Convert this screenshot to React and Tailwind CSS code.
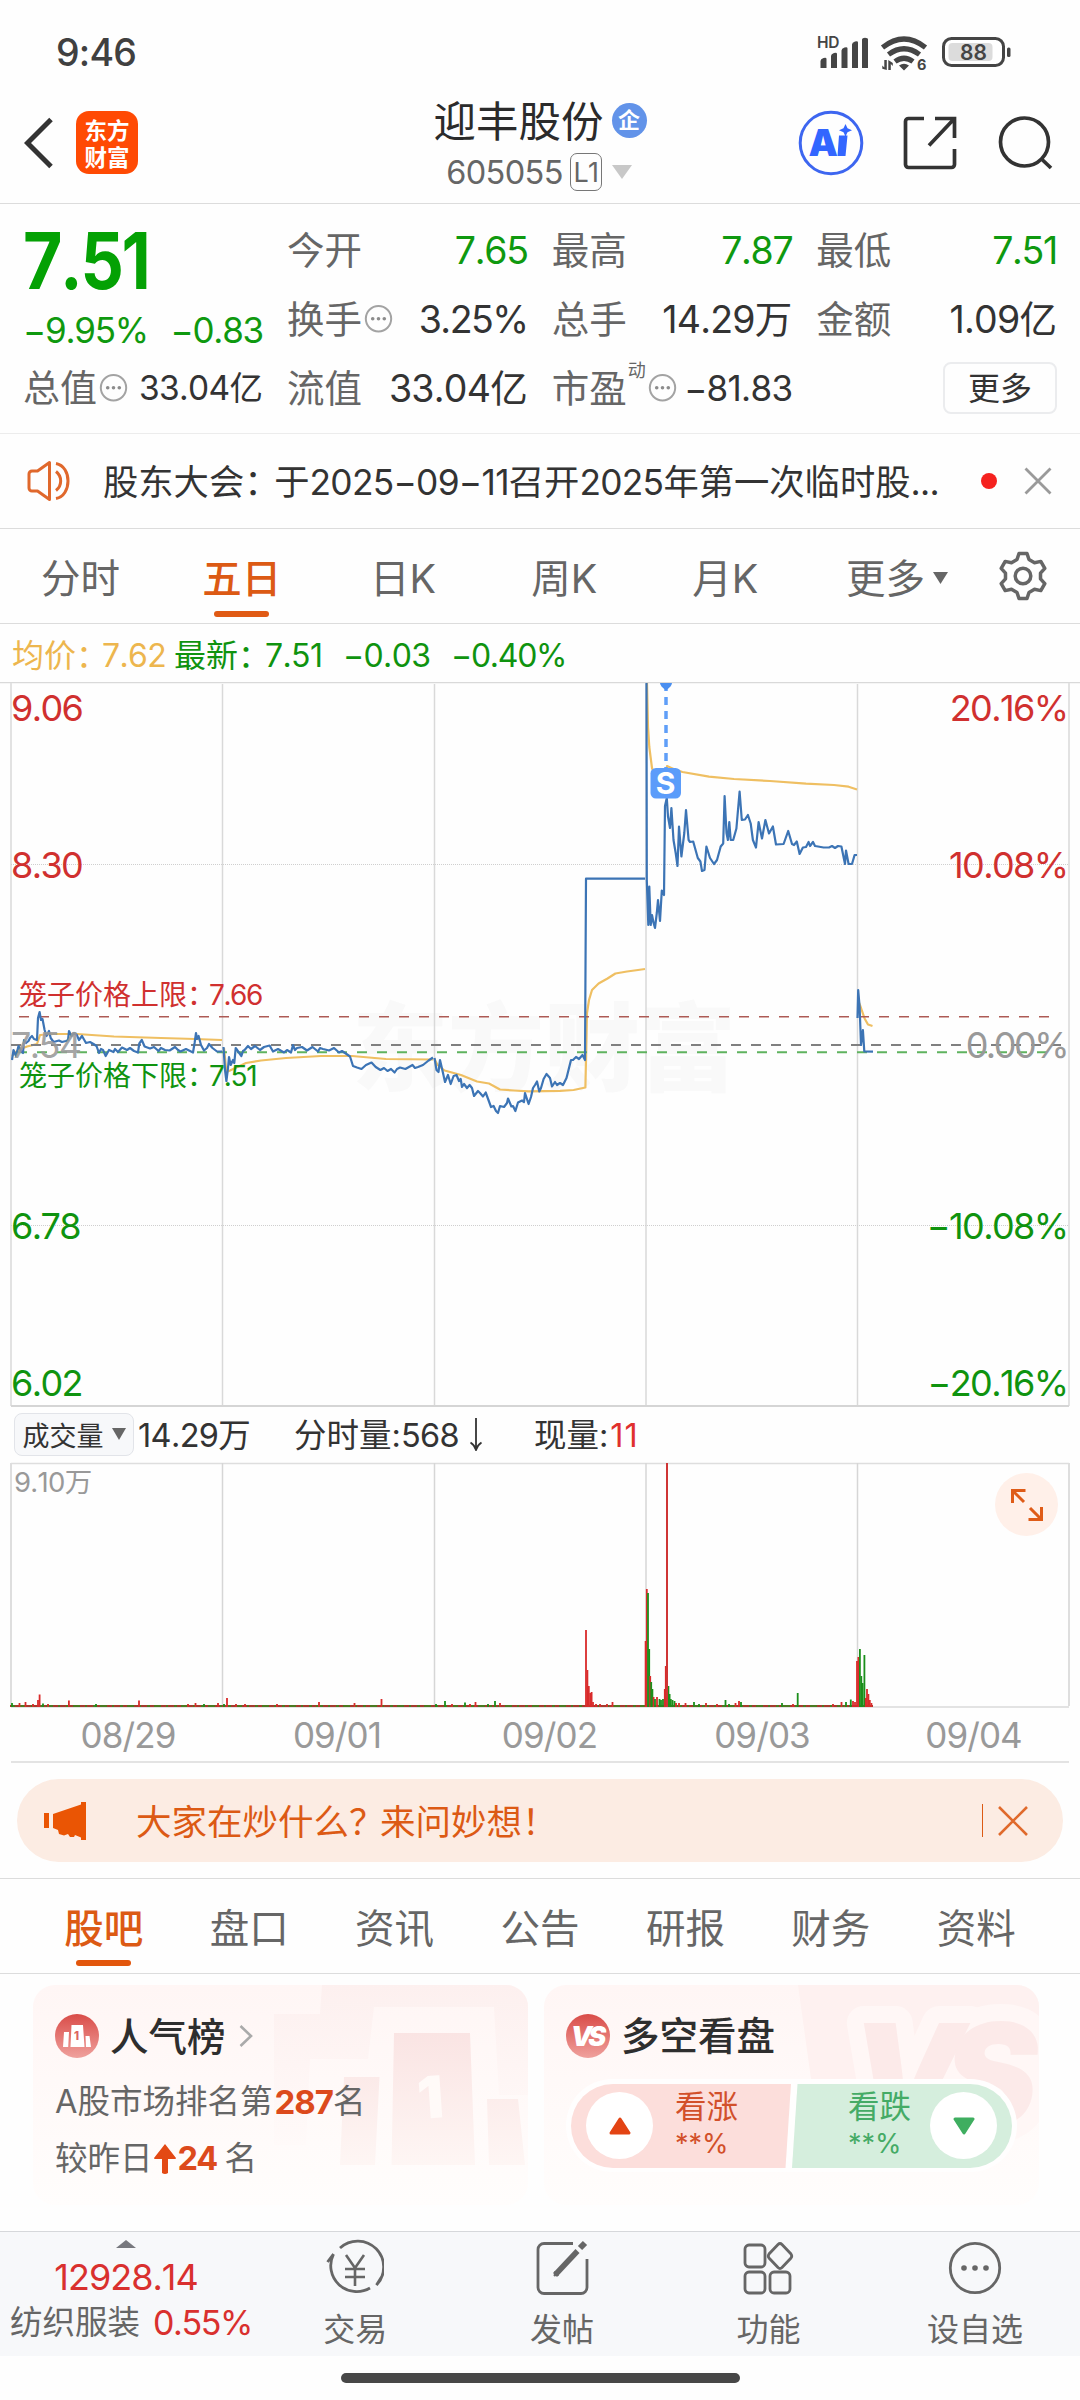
import { Fragment } from 'react'

const QUOTES = [
  { label: '今开', value: '7.65', up: false },
  { label: '最高', value: '7.87', up: false },
  { label: '最低', value: '7.51', up: false },
  { label: '换手', value: '3.25%', tip: true },
  { label: '总手', value: '14.29万' },
  { label: '金额', value: '1.09亿' },
]

const PERIODS = ['分时', '五日', '日K', '周K', '月K']
const SECTIONS = ['股吧', '盘口', '资讯', '公告', '研报', '财务', '资料']
const DATES = [['08/29', 128], ['09/01', 337], ['09/02', 549.5], ['09/03', 762], ['09/04', 973.5]]
const DAY_X = [222.5, 434.5, 646, 857.5]

const PRICE = [
  '12,1060 13.5,1050 16,1056 18.5,1046 21,1051 23,1053 24,1040 26,1043 28.5,1041 30,1038 32,1036 34,1039 37,1040 38,1018 39.6,1012 41,1020 42.5,1019 44.6,1030 46.5,1036 49,1031 50.7,1038 53.5,1042 59,1040.5 62,1042 66,1041 68,1040 69,1031 71.4,1036 74,1033 76.8,1035 79,1040 82,1036 86,1043 90,1042 93.5,1044 96.5,1046 99,1053 101,1049 103,1050 105.7,1056 109,1050 113.5,1052 115,1049 118,1052 122,1047.5 127,1050 130,1048 134,1051 138,1052.5 139.3,1043.5 141.8,1040 144.6,1046.5 150,1048.5 154,1047 158.5,1051 161,1048 165,1050 169.6,1050.5 175,1047 178,1050 180.4,1051.5 186,1049 190,1051 193,1052.5 194.6,1043 196,1033 197,1039 198.6,1036 201,1045 204,1050.5 207,1048 209,1044 212.5,1048 217,1051.5 222,1051.5',
  '223.5,1047 225,1070 226.4,1081 228,1068 229,1057 230.7,1065 233,1060 234.3,1063 235.7,1048 238.5,1052 241.4,1056 243,1051 244.6,1050 248,1046 251,1049 255,1046 260,1050 264,1047 269.6,1045.5 273,1051.5 278,1049 284,1052.5 287,1050 291,1052.5 293,1045 295,1050 297,1048 302,1047 307,1050.5 312.5,1047 318,1051.5 320,1048 323,1049 329,1050.5 334,1048 339,1052.5 342,1051 346.5,1054 350,1056.5 353,1066 357,1067.5 361.5,1069 366,1065 371.5,1062.5 375.7,1067 380.4,1070 384,1068 387.5,1071 391,1069 394.6,1072.5 397,1069 400,1067.5 405.4,1069 412.5,1065 415,1068 418,1067 423,1065 428.6,1060.5 433,1057.5',
  '434.5,1058 436.5,1070 438.5,1072 440,1060 443,1073 445,1082 448,1075 450.7,1084 453.6,1076 456.5,1075 459,1081 460.7,1079 462,1087 464,1084 467,1088 469.6,1085 472,1088 474,1096 478,1091 480,1093 483,1096.5 485.7,1092.5 489,1101.5 491,1107 493.6,1106 496,1111 498,1113 500,1106 504,1107 507,1103 508,1098.5 511.4,1106.5 513,1106 515.4,1111 518,1102.5 522,1100.5 524,1102 525,1093 528.6,1104 531,1097 533,1088 535,1085 537,1081.5 539.3,1091.5 541,1088 543.6,1079 546.5,1074 550,1078 552,1086.5 555,1082 557,1085 560,1083 563,1085 566.5,1078 569,1068 571,1060 573,1060 576,1057 579,1059 582.5,1055 585,1060 586,878.7 645,878.7',
  '646.5,683 646.8,880 648.3,925 649.3,886.5 650.7,925 652,915 653.6,923 655,928 656.8,913 658,900 660,921 661.8,890.5 664,895 665,806 666.8,798 668,816.5 670,828 671.4,808 673.5,840 675.7,853 677.5,866 679,826.5 681.4,856.5 684.3,833 686,810 688.6,840 690,842 693.2,841.5 697.8,858 700.4,861.5 702,871 704.5,870 706.4,846.5 710,858 714,864 717,860 720.7,846.5 723.2,843.5 724.6,796 726.5,833 727.9,840 729.3,822 730.7,840 733.2,840 736.4,828.5 739.6,791.5 741.8,820 745,819.5 747.9,815 750.7,823.5 752.9,840 756,847.5 758.6,822 762,838.5 765.4,820 769,833.5 772.9,826.5 776,844.5 783.6,844 788.2,831 792,844 794,845 796.8,841.5 799.6,854 802.9,847.5 806,847 808.6,842 810,846 813,842 815,846 818,846.5 823.6,847.5 829,847.5 832,846 835,848 838,846 841.4,846.5 845,864 846,850.5 848.6,864 852,864 854.6,855 857,855',
  '857.5,1018 858.2,990 859.6,1006.5 861,1045 862.9,1030 864.3,1051.5 873,1051.7',
]

const AVERAGE = [
  '12,1056 18,1050 27,1046.5 37,1044 40,1035 53.6,1034 77,1034 114,1036.5 161,1038 195,1039 222,1040',
  '224,1048 226.4,1072 230,1070.5 246,1063 261,1060.5 286,1058 321,1056 352,1056 386,1059 433,1059.5',
  '434.5,1059 437.5,1065 444.6,1070.5 461,1075 477,1081.5 489,1083.5 500,1089.5 514,1090.5 528.6,1091.3 560,1090.8 573.6,1090 585.4,1087.5 587,1013 589,1000 592,990 598.6,983.5 607.5,978.5 615.4,973.5 627,971.5 638,970 645,969',
  '647,683 648,727 649.3,747 652,768 656,778 665.7,792 667,766 673.6,769 682.5,772 709,776.7 734,779 770,781 806,783.7 834,785 848.6,786.7 857,789.5',
  '858,1000 861,1008 864.6,1018.5 868,1024.5 872.5,1026',
]

// [x, height, direction]
const VOLUME = [
  [12, 4, 'd'], [19.5, 4, 'u'], [25.5, 5, 'u'], [33, 3, 'u'], [38, 7, 'u'], [39.6, 12.5, 'u'], [43, 3.5, 'd'], [48, 3, 'u'],
  [68.9, 6.5, 'u'], [96, 3, 'd'], [139, 6.5, 'u'], [188, 3, 'u'], [195.5, 4, 'u'], [204, 3, 'd'], [218, 4, 'u'],
  [224, 3, 'd'], [227, 9, 'u'], [236, 3, 'u'], [245, 3, 'u'], [277, 3, 'u'], [319, 5, 'u'], [354.5, 4, 'u'], [381.5, 8, 'u'],
  [436, 3, 'd'], [445, 6, 'd'], [452, 3, 'u'], [465, 4.5, 'd'], [470, 3, 'u'], [475.5, 5, 'u'], [488, 3, 'd'], [495, 6, 'd'], [500, 4, 'u'],
  [586, 77, 'u'], [587.4, 37, 'u'], [588.8, 21, 'u'], [590.2, 14, 'u'], [591.6, 15, 'u'], [593, 5, 'u'], [596, 3, 'u'], [600, 3, 'u'], [607, 3, 'u'], [612.5, 5, 'u'],
  [645.6, 66, 'u'], [646.8, 118, 'u'], [648, 114, 'd'], [649.2, 58, 'd'], [650.2, 31, 'u'], [651.2, 25, 'd'], [652.4, 18, 'd'], [653.6, 10, 'u'],
  [655, 8, 'd'], [657, 10, 'u'], [659.5, 8, 'd'], [661, 7, 'd'], [663, 8, 'd'], [664.8, 18, 'u'], [665.8, 41, 'u'], [668.4, 21, 'd'],
  [669.6, 13, 'd'], [670.8, 8, 'd'], [672.5, 7, 'd'], [674.5, 6, 'd'], [676, 4, 'u'], [679, 4, 'u'], [685.5, 4, 'u'], [694, 5, 'd'], [699, 3, 'd'],
  [706, 4, 'u'], [717, 3, 'u'], [725.5, 7, 'd'], [729, 3, 'd'], [735.5, 4, 'u'], [739, 6, 'u'], [741, 5, 'd'], [782, 4, 'd'], [793, 3, 'u'],
  [797.7, 14, 'd'], [833, 3, 'u'], [841.5, 5, 'u'], [846, 5, 'd'], [850.8, 7.5, 'd'], [853, 6, 'u'], [855, 5, 'u'],
  [857, 46, 'u'], [858.4, 50, 'u'], [859.9, 58, 'd'], [861.3, 31, 'd'], [862.6, 24, 'd'], [864.4, 52, 'd'], [865.8, 9, 'u'],
  [867, 18, 'u'], [868.4, 13, 'u'], [869.8, 7, 'u'], [871.4, 4, 'u'],
]

// tightens the digits and latin runs of a mixed string, leaves the han glyphs alone
function Mix({ children }) {
  return String(children).split(/([0-9A-Za-z.,%/−-]+)/).map((part, i) => (
    i % 2
      ? <span key={i} className={part.includes('%') ? 'tracking-[-0.04em]' : 'tracking-[-0.02em]'}>{part}</span>
      : <Fragment key={i}>{part}</Fragment>
  ))
}

function Tip() {
  return (
    <svg width="29" height="29" viewBox="0 0 29 29" fill="none">
      <circle cx="14.5" cy="13.7" r="12.7" stroke="#a3a3a3" strokeWidth="2" />
      <g fill="#8c8c8c">
        <circle cx="8.7" cy="13.7" r="1.8" />
        <circle cx="14.5" cy="13.7" r="1.8" />
        <circle cx="20.3" cy="13.7" r="1.8" />
      </g>
    </svg>
  )
}

function StatusBar() {
  return (
    <div className="flex h-[102px] items-center justify-between pl-[56px] pr-[68px] pt-[3px]">
      <span className="text-[37.500px] font-medium leading-none tracking-[-0.02em] text-[#404040]">9:46</span>
      <svg width="196" height="38" viewBox="817 34 196 38" fill="#454545">
        <text x="818" y="48" fontSize="15.5" fontWeight="600" letterSpacing="-0.3">HD</text>
        <path d="M821.5 68v-7q0-2 3-3 3-1 3 1v9zM832 68V56q0-2 3-3 3-1 3 1v14zM842.5 68V50.500q0-2 3-3 3-1 3 1V68zM853 68V44.500q0-2 3-3 3-1 3 1V68zM863 68V39.500q0-1.500 3-1.800 3 0 3 1.800V68z" />
        <g fill="none" stroke="#454545" strokeWidth="5.200">
          <path d="M883.500 47.500q21.500-17 43 0" />
          <path d="M889.500 54.500q15.500-11.500 31 0" />
          <path d="M896 61.500q9-6.500 18 0" />
        </g>
        <path d="M900 65.500q5-3.500 10 0l-5 5zM885.300 60v7.500l-2-2v3.200l4.500 1.300V60zM889.300 60v10h2.500v-6l2 2v-3z" />
        <text x="918" y="70" fontSize="14.5" fontWeight="700">6</text>
        <rect x="944.500" y="38.500" width="60" height="27" rx="8" fill="#fff" stroke="#454545" strokeWidth="3" />
        <rect x="949.500" y="43" width="44" height="18" rx="4" fill="#dcdcdc" />
        <rect x="1008" y="47.500" width="3.500" height="9.500" rx="1.500" />
        <text x="974.500" y="60" fontSize="21" fontWeight="600" textAnchor="middle">88</text>
      </svg>
    </div>
  )
}

function Header() {
  return (
    <header className="grid h-[102px] grid-cols-[1fr_auto_1fr] border-b border-[#dcdcdc]">
      <div className="flex items-center gap-[23px] pl-[24px] pb-[20px]">
        <svg width="29" height="52" viewBox="0 0 29 52" fill="none" stroke="#333" strokeWidth="5">
          <path d="M27 2.500 3.500 26 27 49.500" />
        </svg>
        <div className="flex h-[63px] w-[62px] flex-col items-center justify-center rounded-[13px] bg-[#ff4a04] font-['Noto_Sans_CJK_SC',sans-serif] text-[22.500px] font-bold leading-[27px] text-white">
          <span>东方</span>
          <span>财富</span>
        </div>
      </div>
      <div className="flex flex-col items-center pt-px">
        <div className="flex h-[37px] items-center gap-[8px]">
          <h1 className="pt-px text-[42.500px] leading-none text-[#2b2b2b]">迎丰股份</h1>
          <span className="mb-[3px] flex size-[35px] items-center justify-center rounded-full bg-[#6293e9] text-[22px] font-bold leading-none text-white">企</span>
        </div>
        <div className="mt-[13px] flex h-[38px] items-center pr-[2px] text-[32.500px] leading-none text-[#666]">
          <span className="pt-[2px] tracking-[-0.02em]">605055</span>
          <span className="ml-[7px] flex h-[38px] w-[32px] items-center justify-center rounded-[7px] border-[1.500px] border-[#777] text-[27px] tracking-[-0.03em]">L1</span>
          <svg className="ml-[10px]" width="20" height="14" viewBox="0 0 20 14"><path d="M0 0h20L10 14z" fill="#c8c8c8" /></svg>
        </div>
      </div>
      <div className="flex items-center justify-end pb-[20px] pr-[27px]">
        <svg width="66" height="66" viewBox="0 0 66 66">
          <circle cx="33" cy="33" r="30.800" fill="none" stroke="#3d66f0" strokeWidth="3" />
          <text x="10.500" y="45.500" fontSize="37" fontWeight="900" fill="#3366ff">A</text>
          <path d="m41 25.500h8.500L47.500 46h-8zM47.500 14l2 4.300 4.500 2-4.500 2-2 4.200-2-4.200-4.500-2 4.500-2z" fill="#3366ff" />
        </svg>
        <svg className="ml-[39px]" width="54" height="54" viewBox="0 0 54 54" fill="none" stroke="#333" strokeWidth="3.700">
          <path d="M21 2.500H5.500a3 3 0 0 0-3 3v43a3 3 0 0 0 3 3h43a3 3 0 0 0 3-3V33" />
          <path d="M32 2.500h19.500V22M51 3 26 29.500" />
        </svg>
        <svg className="ml-[41px]" width="55" height="54" viewBox="0 0 55 54" fill="none" stroke="#333" strokeWidth="3.700">
          <circle cx="26.500" cy="26" r="24" />
          <path d="m43 42.500 10 9.500" />
        </svg>
      </div>
    </header>
  )
}

function Quote() {
  return (
    <section className="grid h-[230px] grid-cols-[240px_1fr] gap-x-[24px] border-b border-[#ececec] pl-[23px] pr-[23px] pt-[12px] leading-none">
      <div className="flex flex-col">
        <div className="flex h-[90px] items-center">
          <span className="origin-left scale-x-[0.87] text-[78px] font-bold tracking-[-0.035em] text-[#04a104]">7.51</span>
        </div>
        <div className="flex h-[48px] items-center justify-between text-[35px] text-[#0f990f]">
          <span className="tracking-[-0.035em]">−9.95%</span>
          <span className="tracking-[-0.035em]">−0.83</span>
        </div>
        <div className="flex h-[69px] items-center justify-between">
          <span className="flex items-center gap-[2px] text-[37px] text-[#666]">总值<Tip /></span>
          <span className="text-[33.500px] text-[#333]"><Mix>33.04亿</Mix></span>
        </div>
      </div>
      <div className="grid auto-rows-[69px] grid-cols-3 gap-x-[24px]">
        {QUOTES.map(q => (
          <div key={q.label} className="flex items-center justify-between whitespace-nowrap text-[37.500px]">
            <span className="flex items-center gap-[2px] text-[#666]">{q.label}{q.tip && <Tip />}</span>
            {q.up === false
              ? <span className="tracking-[-0.035em] text-[#0f990f]">{q.value}</span>
              : <span className="text-[#333]"><Mix>{q.value}</Mix></span>}
          </div>
        ))}
        <div className="flex items-center justify-between text-[37.500px]">
          <span className="text-[#666]">流值</span>
          <span className="text-[#333]"><Mix>33.04亿</Mix></span>
        </div>
        <div className="flex items-center justify-between text-[37.500px]">
          <span className="flex items-center text-[#666]">
            市盈<sup className="-top-[18px] ml-[1px] mr-[2px] self-center text-[18px]">动</sup><Tip />
          </span>
          <span className="text-[35px] text-[#333]"><Mix>−81.83</Mix></span>
        </div>
        <div className="flex items-center justify-end">
          <button className="mb-[2px] flex h-[52px] w-[114px] items-center justify-center rounded-[8px] border-2 border-[#ebecee] pt-[2px] text-[32px] text-[#333]">更多</button>
        </div>
      </div>
    </section>
  )
}

function Notice() {
  return (
    <section className="flex h-[95px] items-center border-b border-[#dcdcdc] pl-[27px] pr-[28px]">
      <svg width="48" height="42" viewBox="0 0 48 42" fill="none" stroke="#e0682c" strokeWidth="3">
        <path d="M22.500 2.500v37L10.500 31H5a3 3 0 0 1-3-3V14a3 3 0 0 1 3-3h5.500z" strokeLinejoin="round" />
        <path d="M29 11.500a12 12 0 0 1 0 19M29 3.500c16 3 16 32 0 35" />
      </svg>
      <p className="ml-[28px] w-[838px] whitespace-nowrap pt-[3px] text-[35.300px] leading-none text-[#333]">
        股东大会<span className="inline-block w-[30px]">：</span><Mix>于2025−09−11召开2025年第一次临时股...</Mix>
      </p>
      <span className="ml-[40px] size-[16px] rounded-full bg-[#f5221f]" />
      <svg className="ml-auto" width="28" height="28" viewBox="0 0 28 28" stroke="#9a9a9a" strokeWidth="2.800">
        <path d="m1.500 1.500 25 25m0-25-25 25" />
      </svg>
    </section>
  )
}

function Periods() {
  return (
    <nav className="flex h-[95px] items-center border-b border-[#dcdcdc] text-[39.500px] leading-none text-[#666]">
      {PERIODS.map((p, i) => (
        <div key={p} className={`relative flex h-full w-[161.200px] items-center justify-center pt-[7px] ${i === 1 ? 'font-medium text-[#dc5a14]' : ''}`}>
          {p}
          {i === 1 && <span className="absolute bottom-[6px] h-[6px] w-[55px] rounded-full bg-[#e05a14]" />}
        </div>
      ))}
      <div className="ml-[40px] flex items-center gap-[8px] pt-[7px]">
        更多
        <svg className="mb-[4px]" width="15" height="12" viewBox="0 0 15 12"><path d="M0 0h15L7.500 12z" fill="#666" /></svg>
      </div>
      <svg className="ml-auto mr-[32px]" width="50" height="50" viewBox="0 0 50 50" fill="none" stroke="#666" strokeWidth="3.500" strokeLinejoin="round">
        <path d="M21 2.500h8l2 6 5.500 3.200 6.300-1.300 4 7-4.300 4.800v5.600l4.300 4.800-4 7-6.300-1.300-5.500 3.200-2 6h-8l-2-6-5.500-3.200-6.300 1.300-4-7 4.300-4.800v-5.600l-4.300-4.800 4-7 6.300 1.300L19 8.500z" />
        <circle cx="25" cy="25" r="7.800" />
      </svg>
    </nav>
  )
}

function PriceChart() {
  return (
    <svg className="block" width="1080" height="725" viewBox="0 682 1080 725">
      <text x="352" y="1083" fontSize="96" fontWeight="900" fill="#f9f9f9">东方财富</text>
      <g stroke="#d9d9d9" strokeWidth="1.500" fill="none">
        <path d="M0 682.500H1080" />
        <path d="M11 683V1406M1069 683V1406" stroke="#e2e2e2" strokeWidth="2" />
        {DAY_X.map(x => <path key={x} d={`M${x} 684V1406`} />)}
        <path d="M11 1406H1069" stroke="#d5d5d5" strokeWidth="2" />
        <path d="M11 864.500H1069M11 1225.500H1069" stroke="#cfcfcf" strokeWidth="1" strokeDasharray="1 1" />
      </g>
      <g fill="none" strokeLinejoin="round">
        {AVERAGE.map((points, i) => <polyline key={i} points={points} stroke="#efbf62" strokeWidth="2.200" />)}
        <path d="M19 1016.700H1055" stroke="#ad5a54" strokeWidth="1.500" strokeDasharray="10 10" />
        <path d="M11 1045H1069" stroke="#808080" strokeWidth="2" strokeDasharray="10 10" />
        <path d="M17 1052.300H1055" stroke="#5fb35f" strokeWidth="2" strokeDasharray="10 10" />
        {PRICE.map((points, i) => <polyline key={i} points={points} stroke="#3c74b5" strokeWidth="2.200" />)}
      </g>
      <g fontSize="36" letterSpacing="-1.600" fill="#d0302f">
        <text x="11" y="721">9.06</text>
        <text x="11" y="878">8.30</text>
        <text x="11" y="1058" fill="#999" fillOpacity="0.9">7.54</text>
        <text x="11" y="1239" fill="#0f930f">6.78</text>
        <text x="11" y="1396" fill="#0f930f">6.02</text>
      </g>
      <g fontSize="36" letterSpacing="-1.600" textAnchor="end" fill="#d0302f">
        <text x="1067.500" y="721">20.16%</text>
        <text x="1067.500" y="878">10.08%</text>
        <text x="1067" y="1058" fill="#999" letterSpacing="-2.500">0.00%</text>
        <text x="1067.500" y="1239" fill="#0f930f">−10.08%</text>
        <text x="1067.500" y="1396" fill="#0f930f">−20.16%</text>
      </g>
      <g fontSize="28">
        <g fill="#d0302f">
          <text x="19" y="1005">笼子价格上限：</text>
          <text x="209" y="1005" letterSpacing="-1.400">7.66</text>
        </g>
        <g fill="#0f930f">
          <text x="19" y="1085.500">笼子价格下限：</text>
          <text x="209" y="1085.500" letterSpacing="-1.200">7.51</text>
        </g>
      </g>
      <path d="M666 683V768" stroke="#5f9ef8" strokeWidth="3.500" strokeDasharray="8 6" />
      <path d="M660 683h12q0 3-6 7.500-6-4.500-6-7.500z" fill="#4a8ff0" />
      <rect x="650.500" y="768" width="30.500" height="30.500" rx="5.500" fill="#5b9cfa" />
      <text x="665.600" y="794" fontSize="30" fontWeight="700" fill="#fff" textAnchor="middle">S</text>
    </svg>
  )
}

function VolumeChart() {
  return (
    <div className="relative">
      <svg className="block" width="1080" height="303" viewBox="0 1461 1080 303">
        <g stroke="#dedede" strokeWidth="1.500" fill="none">
          <path d="M11 1463.500H1069" />
          <path d="M11 1463V1706M1069 1463V1706" strokeWidth="2" />
          {DAY_X.map(x => <path key={x} d={`M${x} 1463V1706`} stroke="#d6d6d6" />)}
          <path d="M11 1707H1069M11 1762H1069" stroke="#e3e3e3" strokeWidth="2" />
        </g>
        <rect x="10" y="1705" width="863" height="2" fill="#a53a2c" />
        <path d="M12 1706H645M668 1706H857" stroke="#4b7a20" strokeWidth="2" strokeDasharray="3 4 7 5 2 6" />
        {VOLUME.map(([x, h, dir]) => (
          <rect key={x} x={x - 0.9} y={1707 - h} width="1.800" height={h} fill={dir === 'u' ? '#d92b2b' : '#1b8f1b'} />
        ))}
        <path d="M667 1463V1707" stroke="#cf3535" strokeWidth="2" />
        <text x="14" y="1492" fontSize="27.500" fill="#999" letterSpacing="-0.700">9.10万</text>
        <g fontSize="35" fill="#999" textAnchor="middle" letterSpacing="-0.900">
          {DATES.map(([d, x]) => <text key={d} x={x} y="1748">{d}</text>)}
        </g>
      </svg>
      <button className="absolute left-[995px] top-[12px] flex size-[63px] items-center justify-center rounded-full bg-[#fff0e9]">
        <svg width="32" height="32" viewBox="0 0 32 32" fill="none" stroke="#df5c18" strokeWidth="3">
          <path d="M1.500 14V1.500H14.500M2 2l11 11M30.500 18v12.500H17.500M30 30 19 19" />
        </svg>
      </button>
    </div>
  )
}

function VolumeBar() {
  return (
    <div className="flex h-[54px] items-center pl-[14px] pt-[1px] text-[32.500px] leading-none text-[#333]">
      <button className="flex h-[43px] w-[120px] items-center justify-center gap-[8px] rounded-[8px] border-[1.500px] border-[#e2e4e9] bg-[#f7f8fa] pt-[3px] text-[27px]">
        成交量
        <svg className="mb-[4px]" width="14" height="12" viewBox="0 0 14 12"><path d="M0 0h14L7 12z" fill="#666" /></svg>
      </button>
      <span className="ml-[4px] w-[156px] whitespace-nowrap pt-[3px]"><Mix>14.29万</Mix></span>
      <span className="pt-[3px]"><Mix>分时量:568</Mix></span>
      <svg className="ml-[10px]" width="14" height="33" viewBox="0 0 14 33" fill="none" stroke="#333" strokeWidth="1.800">
        <path d="M7 0v31M1.500 24.500q4 2.500 5.500 7.500 1.500-5 5.500-7.500" />
      </svg>
      <span className="ml-[51px] pt-[3px]">现量:<span className="ml-[2px] tracking-[0.03em] text-[#e0302e]">11</span></span>
    </div>
  )
}

function Promo() {
  return (
    <div className="h-[115px] border-b border-[#dcdcdc] px-[17px] pt-[15px]">
      <div className="flex h-[83px] items-center rounded-full bg-[#fcece3] pl-[27px] pr-[35px]">
        <svg width="43" height="38" viewBox="0 0 43 38" fill="#ea5504">
          <path d="M0 11h5v15H0zM9 12 37 2.500V0h5v38h-5v-2.500L31 33l-1 2h-4l-2-3-4 1.500-5-1.500-1-4-5-2z" />
        </svg>
        <p className="ml-[49px] flex pt-[4px] text-[35.500px] leading-none text-[#dc5a14]">大家在炒什么<span className="w-[31px]">？</span>来问妙想！</p>
        <span className="ml-auto h-[33px] w-px bg-[#dc5a14]" />
        <svg className="ml-[15px]" width="30" height="30" viewBox="0 0 30 30" stroke="#e06a2c" strokeWidth="2.600">
          <path d="m1 1 28 28m0-28L1 29" />
        </svg>
      </div>
    </div>
  )
}

function Sections() {
  return (
    <nav className="flex h-[95px] border-b border-[#dcdcdc] px-[31px] text-[39.500px] leading-none text-[#666]">
      {SECTIONS.map((s, i) => (
        <div key={s} className={`relative flex flex-1 items-center justify-center pt-[7px] ${i === 0 ? 'font-medium text-[#dc5a14]' : ''}`}>
          {s}
          {i === 0 && <span className="absolute bottom-[7px] h-[6px] w-[55px] rounded-full bg-[#e2560c]" />}
        </div>
      ))}
    </nav>
  )
}

function RankCard() {
  return (
    <div className="relative h-[220px] w-[495px] overflow-hidden rounded-[22px] bg-linear-to-b from-[#fff6f5] to-[#fffdfc]">
      <svg className="absolute inset-0" width="495" height="220" viewBox="0 0 495 220">
        <defs>
          <linearGradient id="podium" x1="0" y1="0" x2="0" y2="1">
            <stop offset="0" stopColor="#fae4e3" />
            <stop offset="1" stopColor="#fef6f4" />
          </linearGradient>
          <linearGradient id="halo" x1="0" y1="0" x2="0" y2="1">
            <stop offset="0" stopColor="#fdf0ef" />
            <stop offset="1" stopColor="#fffaf9" />
          </linearGradient>
        </defs>
        <path d="M289 0H495V110H466L461 22H341L335 74H277L273 160H241V29H287z" fill="url(#halo)" />
        <path d="M361 48H437L442 180H358.500zM311 92H346.500L342 180H307zM454 114H485L492 180H456z" fill="url(#podium)" />
        <text x="384" y="133" fontSize="58" fontWeight="900" fill="#fffaf8" transform="rotate(-4 398 110)">1</text>
      </svg>
      <div className="relative flex h-[102px] items-center pl-[22px]">
        <svg width="44" height="44" viewBox="0 0 44 44">
          <defs>
            <linearGradient id="badge" x1="0" y1="0" x2="0" y2="1">
              <stop offset="0" stopColor="#d94c48" />
              <stop offset="1" stopColor="#efa19d" />
            </linearGradient>
          </defs>
          <circle cx="22" cy="22" r="22" fill="url(#badge)" />
          <path d="M16.500 11h11.500l1.500 22H15.500zM9 18h5l-.8 15H8zM30.500 22h4l1.500 11h-5z" fill="#fff" />
          <text x="19" y="26" fontSize="11.500" fontWeight="800" fill="#dc6662">1</text>
        </svg>
        <h2 className="ml-[11px] pt-[2px] text-[38.500px] font-medium leading-none text-[#2e2e2e]">人气榜</h2>
        <svg className="ml-[13px]" width="14" height="22" viewBox="0 0 14 22" fill="none" stroke="#aaa" strokeWidth="2.600"><path d="m1.500 1 10.500 10L1.500 21" /></svg>
      </div>
      <p className="relative flex h-[30px] items-center pl-[22px] text-[32.500px] leading-none text-[#666]">
        A股市场排名第<b className="ml-[2px] text-[33px] tracking-[-0.03em] text-[#dc4a1c]">287</b>名
      </p>
      <p className="relative mt-[27px] flex h-[30px] items-center pl-[22px] text-[32.500px] leading-none text-[#666]">
        较昨日
        <svg className="ml-[1px] mr-[2px]" width="22" height="30" viewBox="0 0 22 30" fill="#e34914"><path d="M11 0 22 14q0 1-1 1h-7v14q-3 2-6 0V15H1q-1 0-1-1z" /></svg>
        <b className="tracking-[-0.055em] text-[#dc4a1c]">24</b>
        <span className="ml-[8px]">名</span>
      </p>
    </div>
  )
}

function VsCard() {
  return (
    <div className="relative h-[220px] w-[495px] overflow-hidden rounded-[22px] bg-linear-to-b from-[#fff6f5] to-[#fffdfc]">
      <svg className="absolute inset-0" width="495" height="220" viewBox="0 0 495 220">
        <path d="M254 0H495V130H272z" fill="#fef1f0" />
        <text x="306" y="141" fontSize="142" fontWeight="900" fontStyle="italic" letterSpacing="-20" fill="#fceae9" stroke="#fff7f6" strokeWidth="34" paintOrder="stroke" strokeLinejoin="round">VS</text>
      </svg>
      <div className="relative flex h-[94px] items-center pl-[22px] pt-[7px]">
        <svg width="44" height="44" viewBox="0 0 44 44">
          <circle cx="22" cy="22" r="22" fill="url(#badge)" />
          <text x="20.500" y="32" fontSize="27" fontWeight="900" fontStyle="italic" fill="#fff" textAnchor="middle" letterSpacing="-4">VS</text>
        </svg>
        <h2 className="ml-[11px] pt-[2px] text-[38.500px] font-medium leading-none text-[#2e2e2e]">多空看盘</h2>
      </div>
      <div className="relative ml-[22px] grid h-[93px] w-[451px] place-items-center rounded-full bg-[#fffefe]">
        <svg className="col-start-1 row-start-1" width="441" height="84" viewBox="0 0 441 84">
          <path d="M42 0H220L214.500 84H42A42 42 0 0 1 42 0z" fill="#fcdedb" />
          <path d="M226.500 0H399A42 42 0 0 1 399 84H221z" fill="#d5eedd" />
        </svg>
        <div className="col-start-1 row-start-1 flex w-[441px] items-center justify-between px-[15px] text-[31.500px]">
          <span className="flex size-[67px] items-center justify-center rounded-full bg-white">
            <svg width="22" height="18" viewBox="0 0 22 18" fill="#e34414" stroke="#e34414" strokeWidth="3" strokeLinejoin="round"><path d="M11 2 20 16H2z" /></svg>
          </span>
          <div className="ml-[22px] flex-1 pt-[2px] text-[#d2502a]">
            <div className="h-[34px] leading-[34px]">看涨</div>
            <div className="h-[40px] text-[27px] leading-[40px]">**%</div>
          </div>
          <div className="mr-[19px] pt-[2px] text-[#45ab66]">
            <div className="h-[34px] leading-[34px]">看跌</div>
            <div className="h-[40px] text-[27px] leading-[40px]">**%</div>
          </div>
          <span className="flex size-[67px] items-center justify-center rounded-full bg-white">
            <svg width="22" height="18" viewBox="0 0 22 18" fill="#3fae60" stroke="#3fae60" strokeWidth="3" strokeLinejoin="round"><path d="M11 16 20 2H2z" /></svg>
          </span>
        </div>
      </div>
    </div>
  )
}

const ACTIONS = [
  {
    label: '交易',
    icon: (
      <>
        <path d="M14 9a26 26 0 0 1 36.500 37l5-8M44 49A26 26 0 0 1 7.500 15l-6 8" />
        <path d="m20 16 9 13 9-13M19 30h20M19 38h20M29 29v18" strokeWidth="2.600" />
      </>
    ),
  },
  {
    label: '发帖',
    icon: (
      <>
        <path d="M40 4.500H11a6 6 0 0 0-6 6v38a6 6 0 0 0 6 6h37a6 6 0 0 0 6-6V20" />
        <path d="m47 9 5-5" strokeWidth="6" />
        <path d="M44.500 12 22 36" strokeWidth="5.500" />
        <path d="m21 37 1-5 4 4z" fill="#666" strokeWidth="1" />
      </>
    ),
  },
  {
    label: '功能',
    icon: (
      <>
        <rect x="6" y="6" width="20" height="22" rx="4" />
        <rect x="6" y="33" width="20" height="21" rx="4" />
        <rect x="31" y="33" width="20" height="21" rx="4" />
        <path d="M39 5.500q2-2 4 0l9 9.500q1.500 2 0 4l-9 9.500q-2 2-4 0L30 19q-1.500-2 0-4z" />
      </>
    ),
  },
  {
    label: '设自选',
    icon: (
      <>
        <circle cx="29" cy="29" r="24.700" />
        <g fill="#666" stroke="none">
          <circle cx="18" cy="29" r="2.800" />
          <circle cx="29" cy="29" r="2.800" />
          <circle cx="40" cy="29" r="2.800" />
        </g>
      </>
    ),
  },
]

function BottomBar() {
  return (
    <footer className="flex h-[125px] border-t border-[#d6d8db] bg-[#f7f8fa] leading-none">
      <div className="flex w-[252px] flex-col items-center pt-[8px]">
        <svg width="20" height="8" viewBox="0 0 20 8"><path d="M10 0 20 8H0z" fill="#77787e" /></svg>
        <div className="mt-[11px] text-[36px] tracking-[-0.028em] text-[#d9302e]">12928.14</div>
        <div className="mt-[11px] flex items-center gap-[13px] whitespace-nowrap pl-[10px] text-[32.500px] text-[#666]">
          纺织服装
          <span className="text-[34px] text-[#d9302e]"><Mix>0.55%</Mix></span>
        </div>
      </div>
      {ACTIONS.map(a => (
        <div key={a.label} className="flex w-[206.600px] flex-col items-center pt-[7px] text-[32px] text-[#666]">
          <svg width="58" height="58" viewBox="0 0 58 58" fill="none" stroke="#666" strokeWidth="2.800">{a.icon}</svg>
          <span className="mt-[17px]">{a.label}</span>
        </div>
      ))}
    </footer>
  )
}

export default function App() {
  return (
    <div className="flex h-[2400px] w-[1080px] flex-col bg-[#fefefe] font-['Inter','Noto_Sans_CJK_SC',sans-serif] [font-kerning:none]">
      <StatusBar />
      <Header />
      <Quote />
      <Notice />
      <Periods />
      <div className="flex h-[58px] items-center whitespace-pre pl-[12px] pt-[6px] text-[32px] leading-none">
        <span className="w-[162px] text-[#edb64e]">均价<span className="inline-block w-[26px]">：</span><Mix>7.62</Mix></span>
        <span className="text-[#0f930f]">最新<span className="inline-block w-[27px]">：</span></span>
        <span className="w-[78px] text-[#0f930f]"><Mix>7.51</Mix></span>
        <span className="w-[108px] text-[#0f930f]"><Mix>−0.03</Mix></span>
        <span className="text-[#0f930f]"><Mix>−0.40%</Mix></span>
      </div>
      <PriceChart />
      <VolumeBar />
      <VolumeChart />
      <Promo />
      <Sections />
      <div className="flex h-[257px] gap-[16px] pl-[33px] pt-[11px]">
        <RankCard />
        <VsCard />
      </div>
      <BottomBar />
      <div className="flex flex-1 justify-center pt-[17px]">
        <div className="h-[10px] w-[399px] rounded-full bg-[#474747]" />
      </div>
    </div>
  )
}
